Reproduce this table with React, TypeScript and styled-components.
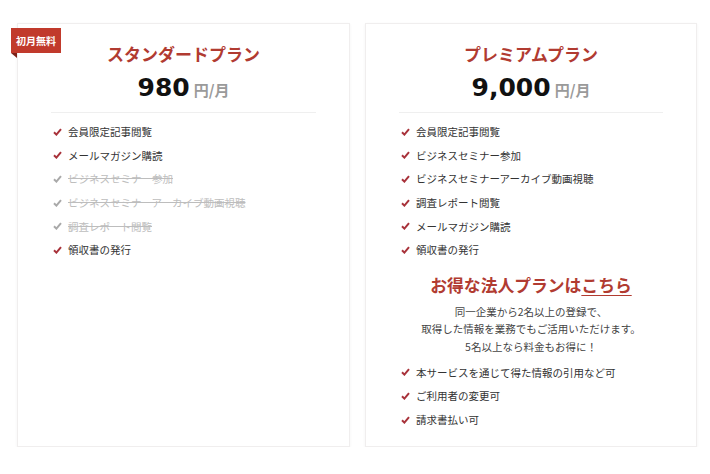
import styled, { createGlobalStyle } from "styled-components";

const GlobalStyle = createGlobalStyle`
  body {
    margin: 0;
    background: #fff;
    font-family: "Noto Sans CJK JP", "Noto Sans", sans-serif;
    color: #333;
  }
`;

const Plans = styled.div`
  display: grid;
  grid-template-columns: 333px 332px;
  gap: 15px;
  padding: 23px 13px 0 17px;
`;

const Card = styled.section`
  position: relative;
  background: #fff;
  border: 1px solid #f0eeee;
  box-shadow: 0 1px 3px rgba(0, 0, 0, 0.05);
  padding: 18px 33px 15px;
`;

const Badge = styled.div`
  position: absolute;
  left: -7px;
  top: 4px;
  width: 50px;
  height: 25px;
  background: #c13a2c;
  color: #fff;
  font-size: 10px;
  font-weight: 700;
  line-height: 25px;
  text-align: center;
  &::after {
    content: "";
    position: absolute;
    left: 0;
    bottom: -5px;
    border-top: 5px solid #7c2118;
    border-left: 6px solid transparent;
  }
`;

const Title = styled.h2`
  margin: 0;
  font-size: 17px;
  line-height: 24px;
  font-weight: 700;
  color: #b13b31;
  text-align: center;
`;

const Price = styled.div`
  margin-top: 5px;
  height: 34px;
  display: flex;
  justify-content: center;
  align-items: baseline;
`;

const Amount = styled.span`
  font-family: "DejaVu Sans", sans-serif;
  font-size: 25px;
  font-weight: 700;
  color: #111;
  line-height: 34px;
`;

const Unit = styled.span`
  margin-left: 4px;
  font-size: 15px;
  font-weight: 700;
  color: #9a9a9a;
`;

const Divider = styled.hr`
  margin: 7px 0 0;
  border: 0;
  border-top: 1px solid #efefef;
`;

const List = styled.ul<{ $top: number }>`
  list-style: none;
  margin: ${(p) => p.$top}px 0 0;
  padding: 0 0 0 2px;
`;

const Item = styled.li<{ $off?: boolean }>`
  display: flex;
  align-items: center;
  gap: 6px;
  height: 23.6px;
  font-size: 10.5px;
  color: ${(p) => (p.$off ? "#bdbdbd" : "#333")};
  text-decoration: ${(p) => (p.$off ? "line-through" : "none")};
  svg {
    flex: none;
    color: ${(p) => (p.$off ? "#a9a9a9" : "#a8323a")};
  }
`;

const Corporate = styled.h3`
  margin: 11px 0 0;
  font-size: 16.8px;
  line-height: 24px;
  font-weight: 700;
  color: #b13b31;
  text-align: center;
  a {
    color: inherit;
    text-decoration: underline;
    text-underline-offset: 3px;
  }
`;

const Note = styled.p`
  margin: 6px 0 0;
  font-size: 10.5px;
  line-height: 17.5px;
  color: #444;
  text-align: center;
`;

const Check = () => (
  <svg width="9" height="8" viewBox="0 0 9 8">
    <path d="M1 4.2 L3.4 6.6 L8 1.2" fill="none" stroke="currentColor" strokeWidth="2" />
  </svg>
);

type Feature = { label: string; off?: boolean };

const standard: Feature[] = [
  { label: "会員限定記事閲覧" },
  { label: "メールマガジン購読" },
  { label: "ビジネスセミナー参加", off: true },
  { label: "ビジネスセミナーアーカイブ動画視聴", off: true },
  { label: "調査レポート閲覧", off: true },
  { label: "領収書の発行" },
];

const premium: Feature[] = [
  { label: "会員限定記事閲覧" },
  { label: "ビジネスセミナー参加" },
  { label: "ビジネスセミナーアーカイブ動画視聴" },
  { label: "調査レポート閲覧" },
  { label: "メールマガジン購読" },
  { label: "領収書の発行" },
];

const corporate: Feature[] = [
  { label: "本サービスを通じて得た情報の引用など可" },
  { label: "ご利用者の変更可" },
  { label: "請求書払い可" },
];

const Features = ({ items, top }: { items: Feature[]; top: number }) => (
  <List $top={top}>
    {items.map((f) => (
      <Item key={f.label} $off={f.off}>
        <Check />
        {f.label}
      </Item>
    ))}
  </List>
);

const App = () => {
  return (
    <>
      <GlobalStyle />
      <Plans>
        <Card>
          <Badge>初月無料</Badge>
          <Title>スタンダードプラン</Title>
          <Price>
            <Amount>980</Amount>
            <Unit>円/月</Unit>
          </Price>
          <Divider />
          <Features items={standard} top={7} />
        </Card>
        <Card>
          <Title>プレミアムプラン</Title>
          <Price>
            <Amount>9,000</Amount>
            <Unit>円/月</Unit>
          </Price>
          <Divider />
          <Features items={premium} top={7} />
          <Corporate>
            お得な法人プランは<a href="#">こちら</a>
          </Corporate>
          <Note>
            同一企業から2名以上の登録で、
            <br />
            取得した情報を業務でもご活用いただけます。
            <br />
            5名以上なら料金もお得に！
          </Note>
          <Features items={corporate} top={5.5} />
        </Card>
      </Plans>
    </>
  );
};

export default App;
